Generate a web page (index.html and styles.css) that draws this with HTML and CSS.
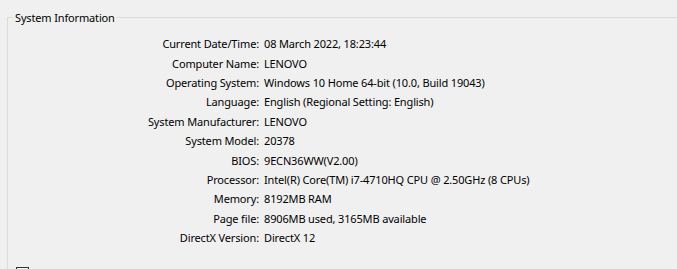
FILE: index.html
```html
<!DOCTYPE html>
<html lang="en">
  <head>
    <meta charset="UTF-8" />
    <title>DirectX Diagnostic Tool</title>
    <link rel="stylesheet" href="styles.css">
  </head>
  <body>
    <div class="page">
      <fieldset class="group">
        <legend>System Information</legend>
        <div class="info-grid">
          <span class="label">Current Date/Time:</span>
          <span class="value">08 March 2022, 18:23:44</span>
          <span class="label">Computer Name:</span>
          <span class="value">LENOVO</span>
          <span class="label">Operating System:</span>
          <span class="value">Windows 10 Home 64-bit (10.0, Build 19043)</span>
          <span class="label">Language:</span>
          <span class="value">English (Regional Setting: English)</span>
          <span class="label">System Manufacturer:</span>
          <span class="value">LENOVO</span>
          <span class="label">System Model:</span>
          <span class="value">20378</span>
          <span class="label">BIOS:</span>
          <span class="value">9ECN36WW(V2.00)</span>
          <span class="label">Processor:</span>
          <span class="value">Intel(R) Core(TM) i7-4710HQ CPU @ 2.50GHz (8 CPUs)</span>
          <span class="label">Memory:</span>
          <span class="value">8192MB RAM</span>
          <span class="label">Page file:</span>
          <span class="value">8906MB used, 3165MB available</span>
          <span class="label">DirectX Version:</span>
          <span class="value">DirectX 12</span>
        </div>
        <label class="check">
          <span class="box"></span>
          <span>Check for WHQL digital signatures</span>
        </label>
      </fieldset>
    </div>
  </body>
</html>
```

FILE: styles.css
```css
html, body {
  margin: 0;
  padding: 0;
  height: 269px;
  overflow: hidden;
}

body {
  background-color: #f0f0f0;
  font-family: "Noto Sans", "Open Sans", sans-serif;
  font-size: 11px;
  letter-spacing: -0.15px;
  color: #000000;
}

.page {
  padding-top: 10px;
}

.group {
  margin: 0 0 0 7px;
  padding: 0;
  border: 1px solid #dcdcdc;
  border-right: none;
  min-width: 0;
}

.group legend {
  margin-left: 5px;
  padding: 0 2px;
  line-height: 15px;
}

.info-grid {
  display: grid;
  grid-template-columns: 251px auto;
  column-gap: 5px;
  grid-auto-rows: 19.4px;
  align-items: center;
  padding-top: 9px;
}

.label {
  text-align: right;
  white-space: nowrap;
}

.value {
  white-space: nowrap;
}

.check {
  display: flex;
  align-items: center;
  gap: 7px;
  margin: 18px 0 0 8px;
  line-height: 16px;
}

.check .box {
  width: 11px;
  height: 11px;
  border: 1px solid #333333;
  background-color: #ffffff;
}
```
